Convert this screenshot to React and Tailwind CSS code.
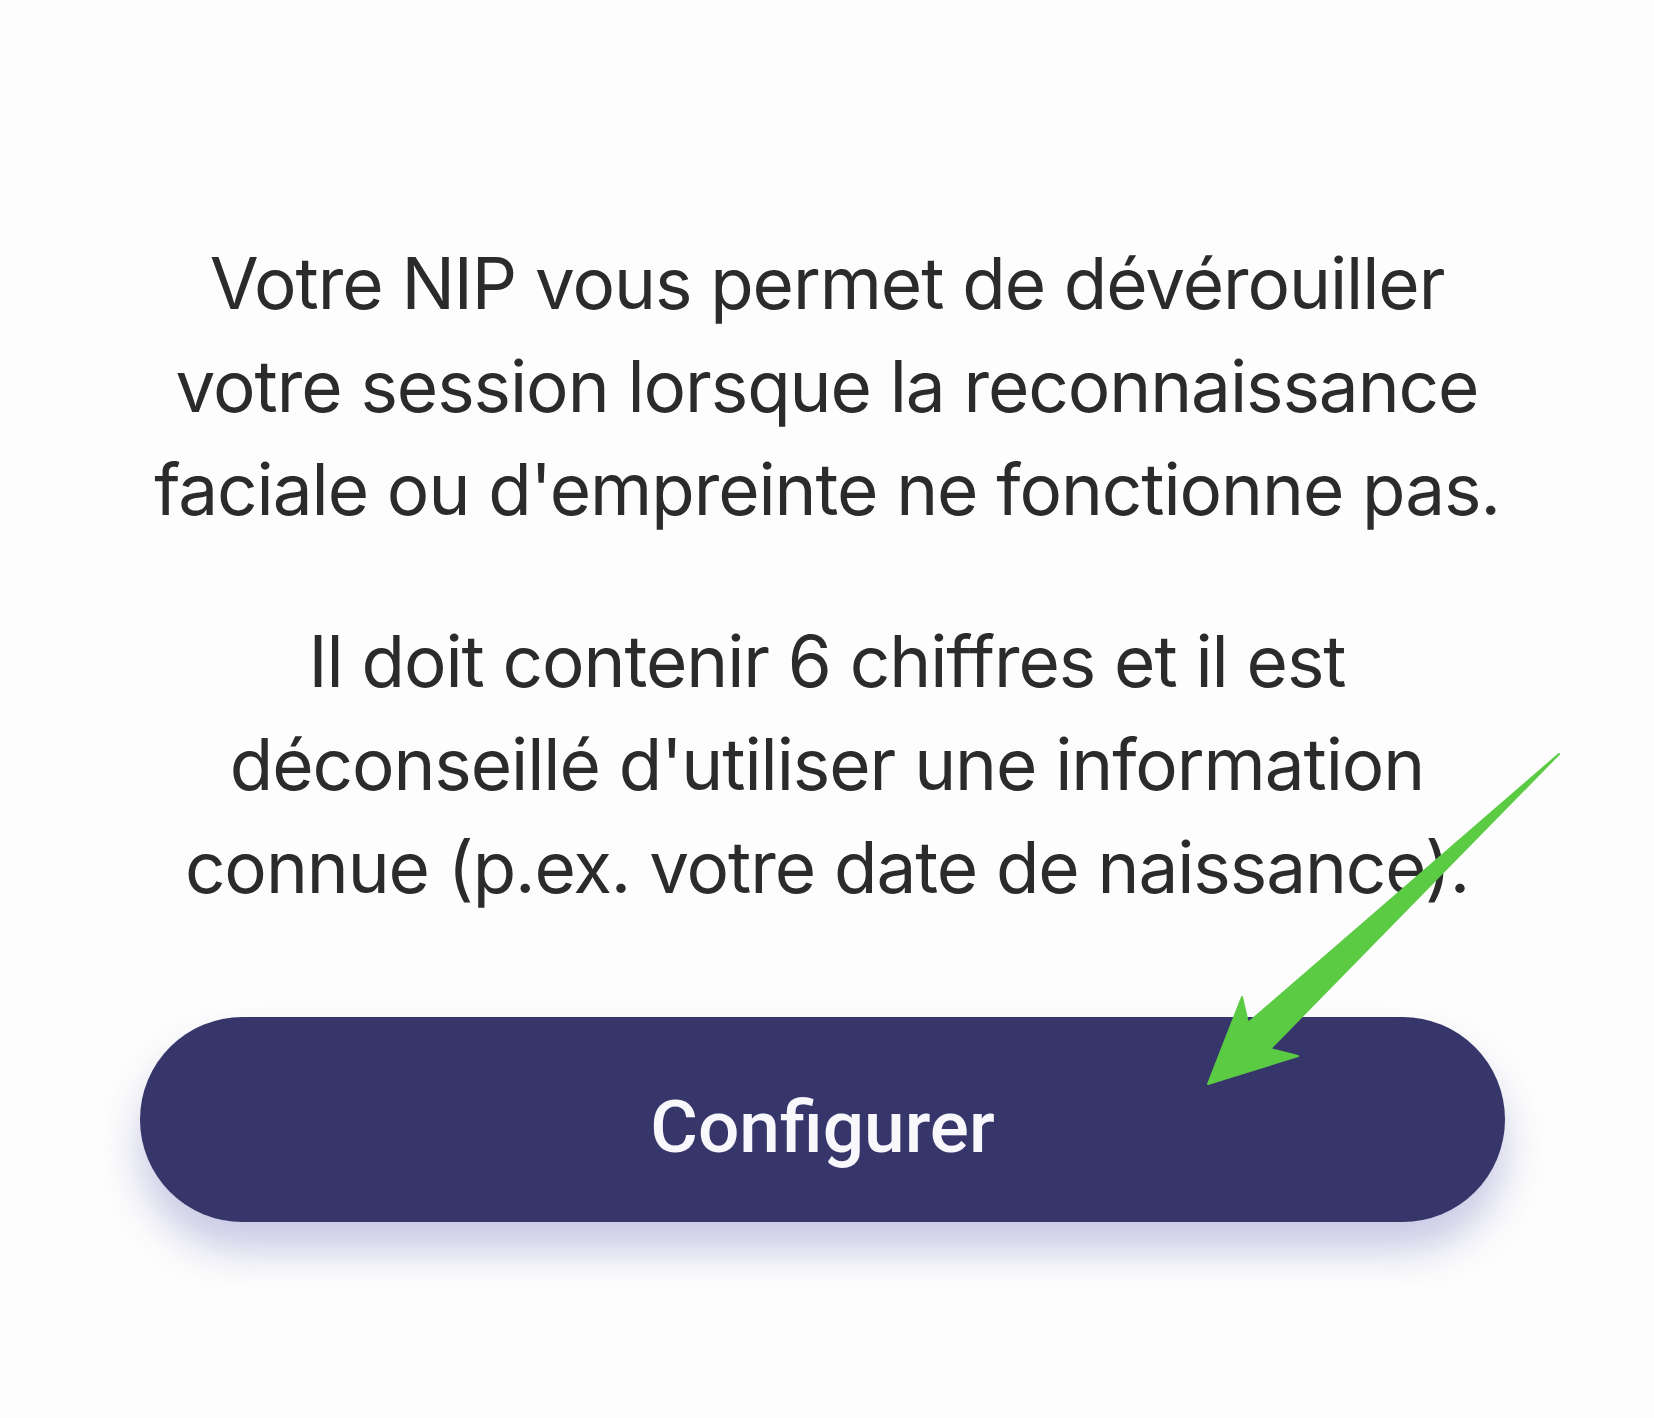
import React from 'react';

const Arrow = () => (
  <svg
    className="absolute inset-0 pointer-events-none"
    width="1654"
    height="1418"
    viewBox="0 0 1654 1418"
  >
    <polygon
      points="1559,754 1270,1049 1298,1056 1208,1084 1242,997 1248,1023"
      fill="#5ccb44"
      stroke="#5ccb44"
      strokeWidth="2"
      strokeLinejoin="round"
    />
  </svg>
);

export default function App() {
  return (
    <div className="relative w-full h-[1418px] overflow-hidden bg-[#fdfdfd] font-['Inter','Liberation_Sans',sans-serif]">
      <div className="pt-[232px] text-center text-[#2b2b2b] text-[71px] leading-[103px] tracking-[-0.015em]">
        <p>
          Votre NIP vous permet de dévérouiller
          <br />
          votre session lorsque la reconnaissance
          <br />
          faciale ou d'empreinte ne fonctionne pas.
        </p>
        <p className="mt-[69px]">
          Il doit contenir 6 chiffres et il est
          <br />
          déconseillé d'utiliser une information
          <br />
          connue (p.ex. votre date de naissance).
        </p>
      </div>

      <div className="ml-[140px] mt-[98px] w-[1365px]">
        <button className="flex h-[205px] w-full items-center justify-center rounded-full bg-[#36366b] pt-[16px] text-[#f7f7fc] shadow-[0_28px_40px_rgba(70,70,170,0.28)]">
          <span className="font-['Roboto','Liberation_Sans',sans-serif] text-[73px] font-medium">
            Configurer
          </span>
        </button>
      </div>

      <Arrow />
    </div>
  );
}
